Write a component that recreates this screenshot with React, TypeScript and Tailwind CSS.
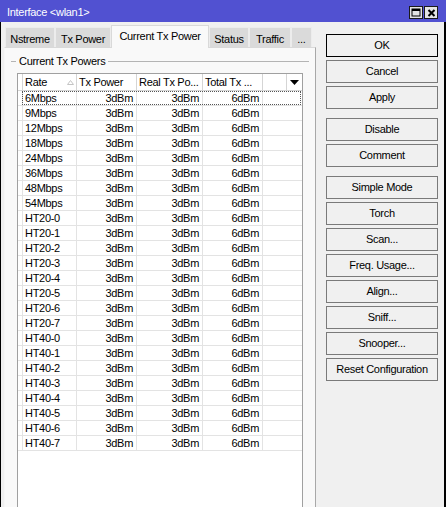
import clsx from 'clsx';

const rates = [
    '6Mbps', '9Mbps', '12Mbps', '18Mbps', '24Mbps', '36Mbps', '48Mbps', '54Mbps',
    'HT20-0', 'HT20-1', 'HT20-2', 'HT20-3', 'HT20-4', 'HT20-5', 'HT20-6', 'HT20-7',
    'HT40-0', 'HT40-1', 'HT40-2', 'HT40-3', 'HT40-4', 'HT40-5', 'HT40-6', 'HT40-7',
];

const tabs = [
    { label: 'Nstreme', w: 'w-[50px]' },
    { label: 'Tx Power', w: 'w-[56px]' },
    { label: 'Current Tx Power', w: 'w-[98px]', active: true },
    { label: 'Status', w: 'w-[40px]' },
    { label: 'Traffic', w: 'w-[42px]' },
    { label: '...', w: 'w-[21px]' },
];

function Btn({ label, primary, className }: { label: string; primary?: boolean; className?: string }) {
    return (
        <div className={clsx(
            'w-[112px] h-[23px] flex items-center justify-center border bg-[#f0f0f0]',
            primary ? 'border-black' : 'border-[#7a7a7a]',
            className
        )}>
            {label}
        </div>
    );
}

function TitleButton({ kind }: { kind: 'max' | 'close' }) {
    return (
        <div className="w-[14px] h-[13px] bg-[#e4e4e4] border border-[#1a1a1a] flex items-center justify-center">
            {kind === 'max' ? (
                <svg width="10" height="9" viewBox="0 0 10 9">
                    <rect x="1" y="1" width="8" height="7" fill="none" stroke="#000" strokeWidth="1" />
                    <rect x="1" y="1" width="8" height="2" fill="#000" />
                </svg>
            ) : (
                <svg width="9" height="8" viewBox="0 0 9 8">
                    <path d="M1.5 1 L7.5 7 M7.5 1 L1.5 7" stroke="#000" strokeWidth="2" />
                </svg>
            )}
        </div>
    );
}

// winbox style interface window, current tx power tab
export default function App() {
    return (
        <div className="w-[446px] h-[507px] overflow-hidden bg-[#f0f0f0] text-black text-[11px] tracking-[-0.3px] font-['Liberation_Sans',Arial,sans-serif] flex flex-col">
            <div className="h-[22px] shrink-0 bg-[#5151d1] flex items-center justify-between pl-[7px] pr-[8px] pt-[3px] text-white">
                <span>Interface &lt;wlan1&gt;</span>
                <div className="flex gap-[1px]">
                    <TitleButton kind="max" />
                    <TitleButton kind="close" />
                </div>
            </div>
            <div className="h-[520px] shrink-0 flex border-l border-r-2 border-black">
                <div className="w-[315px] pl-[3px] pt-[3px] flex flex-col">
                    <div className="h-[22px] flex items-end pl-[1px] relative z-10">
                        {tabs.map((t) => (
                            <div
                                key={t.label}
                                className={clsx(
                                    'flex justify-center whitespace-nowrap',
                                    t.w,
                                    t.active
                                        ? 'h-[23px] -mb-[1px] pt-[2px] bg-[#f9f9f9] border border-b-0 border-[#d9d9d9]'
                                        : 'h-[20px] pt-[3px] bg-[#dadada] border border-b-0 border-[#ececec]'
                                )}
                            >
                                {t.label}
                            </div>
                        ))}
                    </div>
                    <div className="h-[480px] border border-[#d9d9d9] border-l-[#f6f6f6] border-r-[#a8a8a8] bg-[#f9f9f9] pt-[6px] px-[6px]">
                        {/* section header: dash, title, line */}
                        <div className="h-[14px] flex items-center">
                            <div className="w-[5px] h-px bg-[#b4b4b4]" />
                            <span className="px-[3px]">Current Tx Powers</span>
                            <div className="flex-1 h-px bg-[#b4b4b4]" />
                        </div>
                        <div className="mt-[5px] mx-[6px] h-[460px] border border-[#a0a0a0] bg-white">
                            <div className="flex h-[17px] border-b border-[#d5d5d5]">
                                <div className="w-[5px] border-r border-[#d5d5d5]" />
                                <div className="w-[54px] border-r border-[#d5d5d5] pl-[2px] flex items-center justify-between pr-[2px]">
                                    <span>Rate</span>
                                    <svg width="7" height="5" viewBox="0 0 7 5">
                                        <path d="M3.5 0.5 L6.5 4.5 L0.5 4.5 Z" fill="none" stroke="#c4c4c4" strokeWidth="1" />
                                    </svg>
                                </div>
                                <div className="w-[60px] border-r border-[#d5d5d5] pl-[2px] flex items-center">Tx Power</div>
                                <div className="w-[66px] border-r border-[#d5d5d5] pl-[2px] flex items-center whitespace-nowrap">Real Tx Po...</div>
                                <div className="w-[60px] border-r border-[#d5d5d5] pl-[2px] flex items-center whitespace-nowrap">Total Tx ...</div>
                                <div className="w-[24px] border-r border-[#d5d5d5]" />
                                <div className="flex-1 flex items-center justify-center">
                                    <svg width="9" height="5" viewBox="0 0 9 5">
                                        <path d="M0 0 L9 0 L4.5 5 Z" fill="#000" />
                                    </svg>
                                </div>
                            </div>
                            {rates.map((rate, index) => (
                                <div key={rate} className="relative flex h-[15px] border-b border-[#e3e3e3]">
                                    <div className="w-[5px] border-r border-[#e3e3e3]" />
                                    <div className="w-[54px] border-r border-[#e3e3e3] pl-[2px] flex items-center">{rate}</div>
                                    <div className="w-[60px] border-r border-[#e3e3e3] pr-[3px] flex items-center justify-end">3dBm</div>
                                    <div className="w-[66px] border-r border-[#e3e3e3] pr-[3px] flex items-center justify-end">3dBm</div>
                                    <div className="w-[60px] border-r border-[#e3e3e3] pr-[3px] flex items-center justify-end">6dBm</div>
                                    <div className="flex-1" />
                                    {/* focus rectangle on the first row */}
                                    {index === 0 && (
                                        <div className="absolute left-[4px] right-[1px] top-0 bottom-0 border border-dotted border-[#555]" />
                                    )}
                                </div>
                            ))}
                        </div>
                    </div>
                </div>
                <div className="flex-1 pl-[10px] pt-[12px] flex flex-col gap-[3px]">
                    <Btn label="OK" primary />
                    <Btn label="Cancel" />
                    <Btn label="Apply" />
                    <Btn label="Disable" className="mt-[6px]" />
                    <Btn label="Comment" />
                    <Btn label="Simple Mode" className="mt-[6px]" />
                    <Btn label="Torch" />
                    <Btn label="Scan..." />
                    <Btn label="Freq. Usage..." />
                    <Btn label="Align..." />
                    <Btn label="Sniff..." />
                    <Btn label="Snooper..." />
                    <Btn label="Reset Configuration" />
                </div>
            </div>
        </div>
    );
}
